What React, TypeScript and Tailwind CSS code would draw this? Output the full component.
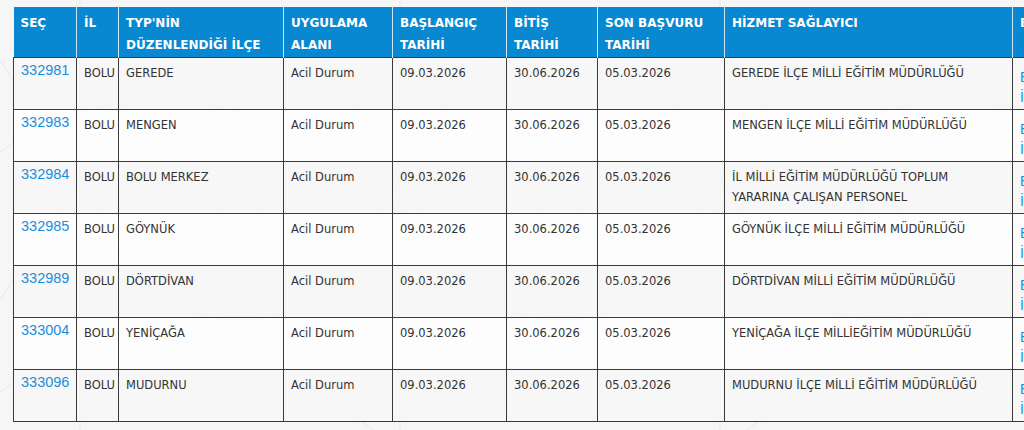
import React from 'react'

// Listing of open TYP positions
const ROWS = [
  { id: '332981', il: 'BOLU', ilce: 'GEREDE', alan: 'Acil Durum', bas: '09.03.2026', bit: '30.06.2026', son: '05.03.2026', hizmet: 'GEREDE İLÇE MİLLİ EĞİTİM MÜDÜRLÜĞÜ' },
  { id: '332983', il: 'BOLU', ilce: 'MENGEN', alan: 'Acil Durum', bas: '09.03.2026', bit: '30.06.2026', son: '05.03.2026', hizmet: 'MENGEN İLÇE MİLLİ EĞİTİM MÜDÜRLÜĞÜ' },
  { id: '332984', il: 'BOLU', ilce: 'BOLU MERKEZ', alan: 'Acil Durum', bas: '09.03.2026', bit: '30.06.2026', son: '05.03.2026', hizmet: 'İL MİLLİ EĞİTİM MÜDÜRLÜĞÜ TOPLUM YARARINA ÇALIŞAN PERSONEL' },
  { id: '332985', il: 'BOLU', ilce: 'GÖYNÜK', alan: 'Acil Durum', bas: '09.03.2026', bit: '30.06.2026', son: '05.03.2026', hizmet: 'GÖYNÜK İLÇE MİLLİ EĞİTİM MÜDÜRLÜĞÜ' },
  { id: '332989', il: 'BOLU', ilce: 'DÖRTDİVAN', alan: 'Acil Durum', bas: '09.03.2026', bit: '30.06.2026', son: '05.03.2026', hizmet: 'DÖRTDİVAN MİLLİ EĞİTİM MÜDÜRLÜĞÜ' },
  { id: '333004', il: 'BOLU', ilce: 'YENİÇAĞA', alan: 'Acil Durum', bas: '09.03.2026', bit: '30.06.2026', son: '05.03.2026', hizmet: 'YENİÇAĞA İLÇE MİLLİEĞİTİM MÜDÜRLÜĞÜ' },
  { id: '333096', il: 'BOLU', ilce: 'MUDURNU', alan: 'Acil Durum', bas: '09.03.2026', bit: '30.06.2026', son: '05.03.2026', hizmet: 'MUDURNU İLÇE MİLLİ EĞİTİM MÜDÜRLÜĞÜ' },
]

const WIDTHS = [63, 42, 165, 109, 114, 91, 127, 288, 160]

function Pattern() {
  // faint geometric background lines
  return (
    <svg className="absolute inset-0 w-full h-full" viewBox="0 0 1024 430" preserveAspectRatio="none">
      <g fill="none" stroke="#e9e9e9" strokeWidth="1">
        <path d="M0 60 L160 300 L320 60 L480 300 L640 60 L800 300 L960 60 L1120 300" />
        <path d="M0 300 L160 60 L320 300 L480 60 L640 300 L800 60 L960 300 L1120 60" />
        <path d="M-40 180 Q160 20 360 180 T760 180 T1160 180" />
        <path d="M-40 420 Q160 260 360 420 T760 420 T1160 420" />
        <path d="M80 0 L80 430 M400 0 L400 430 M720 0 L720 430" />
        <circle cx="240" cy="180" r="140" />
        <circle cx="560" cy="180" r="140" />
        <circle cx="880" cy="180" r="140" />
      </g>
    </svg>
  )
}

export default function App() {
  const th = 'text-left align-top font-bold text-white text-[12px] leading-[22px] pt-[5px] pb-[1px] px-[7px] border-r border-[#cfe6f4]'
  const td = 'align-top text-[11.5px] leading-[20px] text-[#333] pt-[5px] pb-[6px] px-[7px] border border-[#3a3a3a]'

  return (
    <div className="relative w-[1024px] h-[430px] overflow-hidden bg-[#f6f6f6] font-['DejaVu_Sans',Verdana,sans-serif]">
      <Pattern />
      <div className="relative pt-[7px] pl-[13px]">
        <table className="table-fixed border-collapse w-[1159px]">
          <colgroup>
            {WIDTHS.map((w, i) => (
              <col key={i} style={{ width: w }} />
            ))}
          </colgroup>
          <thead>
            <tr className="bg-[#0788d0]">
              <th className={th}>SEÇ</th>
              <th className={th}>İL</th>
              <th className={th}>TYP'NİN DÜZENLENDİĞİ İLÇE</th>
              <th className={th}>UYGULAMA ALANI</th>
              <th className={th}>BAŞLANGIÇ TARİHİ</th>
              <th className={th}>BİTİŞ TARİHİ</th>
              <th className={th}>SON BAŞVURU TARİHİ</th>
              <th className={th}>HİZMET SAĞLAYICI</th>
              <th className={th}>BAŞVURU İŞLEMİ</th>
            </tr>
          </thead>
          <tbody>
            {ROWS.map((r, i) => (
              <tr key={r.id} className={i % 2 === 0 ? 'bg-[#f7f7f7]/80' : 'bg-white/80'}>
                <td className={td + ' !pt-[2px]'}>
                  <a className="text-[#1b8fd9] text-[14.5px] leading-[20px] font-['Liberation_Sans',Arial,sans-serif]">{r.id}</a>
                </td>
                <td className={td}>{r.il}</td>
                <td className={td}>{r.ilce}</td>
                <td className={td}>{r.alan}</td>
                <td className={td}>{r.bas}</td>
                <td className={td}>{r.bit}</td>
                <td className={td}>{r.son}</td>
                <td className={td}>{r.hizmet}</td>
                <td className={td + ' !pt-[9px] !pb-[2px]'}>
                  <div className="text-[#1b8fd9] text-[14px] font-['Liberation_Sans',Arial,sans-serif]">BAŞVUR</div>
                  <div className="text-[#1b8fd9] text-[14px] font-['Liberation_Sans',Arial,sans-serif]">İLAN DETAYI</div>
                </td>
              </tr>
            ))}
          </tbody>
        </table>
      </div>
    </div>
  )
}
